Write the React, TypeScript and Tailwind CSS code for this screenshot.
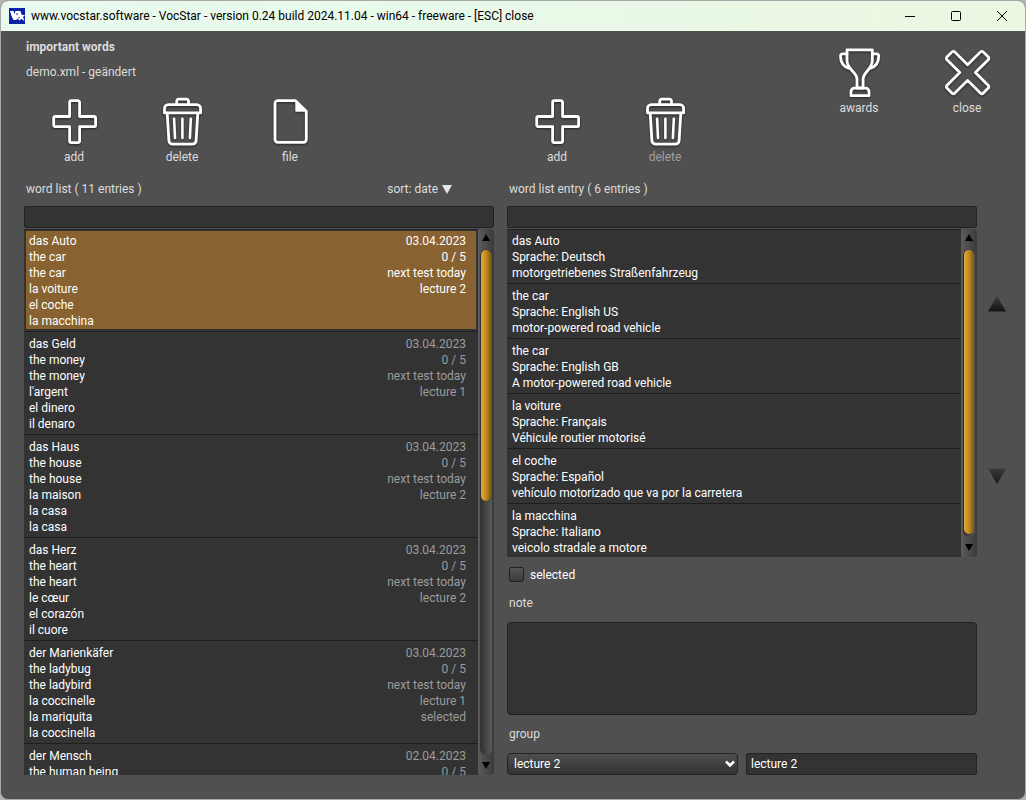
import type { ReactNode } from "react";

type Word = {
  terms: string[];
  info: string[];
  active?: boolean;
};

const words: Word[] = [
  {
    terms: ["das Auto", "the car", "the car", "la voiture", "el coche", "la macchina"],
    info: ["03.04.2023", "0 / 5", "next test today", "lecture 2"],
    active: true,
  },
  {
    terms: ["das Geld", "the money", "the money", "l'argent", "el dinero", "il denaro"],
    info: ["03.04.2023", "0 / 5", "next test today", "lecture 1"],
  },
  {
    terms: ["das Haus", "the house", "the house", "la maison", "la casa", "la casa"],
    info: ["03.04.2023", "0 / 5", "next test today", "lecture 2"],
  },
  {
    terms: ["das Herz", "the heart", "the heart", "le cœur", "el corazón", "il cuore"],
    info: ["03.04.2023", "0 / 5", "next test today", "lecture 2"],
  },
  {
    terms: ["der Marienkäfer", "the ladybug", "the ladybird", "la coccinelle", "la mariquita", "la coccinella"],
    info: ["03.04.2023", "0 / 5", "next test today", "lecture 1", "selected"],
  },
  {
    terms: ["der Mensch", "the human being"],
    info: ["02.04.2023", "0 / 5"],
  },
];

const entries: string[][] = [
  ["das Auto", "Sprache: Deutsch", "motorgetriebenes Straßenfahrzeug"],
  ["the car", "Sprache: English US", "motor-powered road vehicle"],
  ["the car", "Sprache: English GB", "A motor-powered road vehicle"],
  ["la voiture", "Sprache: Français", "Véhicule routier motorisé"],
  ["el coche", "Sprache: Español", "vehículo motorizado que va por la carretera"],
  ["la macchina", "Sprache: Italiano", "veicolo stradale a motore"],
];

function Glyph({ children }: { children: ReactNode }) {
  return (
    <svg
      viewBox="0 0 48 50"
      className="h-[50px] w-12 drop-shadow-[0_1px_1px_rgba(0,0,0,0.55)]"
      fill="none"
      stroke="#fff"
      strokeWidth="2.8"
      strokeLinejoin="round"
      strokeLinecap="round"
      aria-hidden="true"
    >
      {children}
    </svg>
  );
}

const PLUS =
  "M21.4 3.7h6.4a1.8 1.8 0 0 1 1.8 1.8V19.5H43.8a1.8 1.8 0 0 1 1.8 1.8v6.6a1.8 1.8 0 0 1-1.8 1.8H29.6V43.8a1.8 1.8 0 0 1-1.8 1.8h-6.4a1.8 1.8 0 0 1-1.8-1.8V29.7H5.5a1.8 1.8 0 0 1-1.8-1.8v-6.6a1.8 1.8 0 0 1 1.8-1.8H19.6V5.5a1.8 1.8 0 0 1 1.8-1.8Z";

const PlusIcon = () => (
  <Glyph>
    <path d={PLUS} />
  </Glyph>
);

const TrashIcon = () => (
  <Glyph>
    <path d="M18.7 7V4.6a2.4 2.4 0 0 1 2.4-2.4h7a2.4 2.4 0 0 1 2.4 2.4V7" />
    <path d="M6.5 15.9V11.5a3.8 3.8 0 0 1 3.8-3.8H38.8a3.8 3.8 0 0 1 3.8 3.8v4.4H6.5Z" />
    <path d="M9.2 16.2 10.9 43.6a3.8 3.8 0 0 0 3.8 3.6H34.3a3.8 3.8 0 0 0 3.8-3.6L39.8 16.2" />
    <path d="M16.1 21.8 17 41M24.4 21.8V41M32.8 21.8 31.9 41" strokeWidth="2.6" />
  </Glyph>
);

const FileIcon = () => (
  <Glyph>
    <path d="M11.8 3.7H29.5L40.3 14.2V42.5a2.8 2.8 0 0 1-2.8 2.8H11.8A2.8 2.8 0 0 1 9 42.5V6.5a2.8 2.8 0 0 1 2.8-2.8Z" />
    <path d="M30 4.2 40 14H30Z" fill="#fff" strokeWidth="1.4" />
  </Glyph>
);

const TrophyIcon = () => (
  <Glyph>
    <path d="M12 1.8H37.3V13C37.3 21 28.1 24.5 28.1 31V40H22V31C22 24.5 12 21 12 13Z" />
    <path d="M12 5.9H7.6A2 2 0 0 0 5.5 8C5.5 14 8.5 18.5 13.6 20.2M37.3 5.9H41.6A2 2 0 0 1 43.7 8C43.7 14 40.7 18.5 35.6 20.2" />
    <path d="M16 47.7V43.6A3.4 3.4 0 0 1 19.4 40.2H30.6A3.4 3.4 0 0 1 34 43.6V47.7Z" />
  </Glyph>
);

const CrossIcon = () => (
  <Glyph>
    <g transform="translate(24.6 24.6) rotate(45)">
      <path d="M-3.7-25.6H3.7A1.8 1.8 0 0 1 5.5-23.8V-5.5H23.8A1.8 1.8 0 0 1 25.6-3.7V3.7A1.8 1.8 0 0 1 23.8 5.5H5.5V23.8A1.8 1.8 0 0 1 3.7 25.6H-3.7A1.8 1.8 0 0 1-5.5 23.8V5.5H-23.8A1.8 1.8 0 0 1-25.6 3.7V-3.7A1.8 1.8 0 0 1-23.8-5.5H-5.5V-23.8A1.8 1.8 0 0 1-3.7-25.6Z" />
    </g>
  </Glyph>
);

function ToolButton({ label, icon, dim }: { label: string; icon: ReactNode; dim?: boolean }) {
  return (
    <button type="button" className="flex w-[108px] flex-col items-center gap-0.5">
      {icon}
      <span className={dim ? "text-[#a0a0a0]" : "text-[#dcdcdc]"}>{label}</span>
    </button>
  );
}

function Scrollbar({ thumb }: { thumb: string }) {
  return (
    <div className="flex w-4 shrink-0 flex-col items-center rounded-sm bg-linear-to-r from-[#5c5c5c] to-[#3a3a3a]">
      <button type="button" aria-label="Scroll up" className="flex h-[21px] w-full shrink-0 items-start justify-center pt-[5px]">
        <svg viewBox="0 0 8 7" className="h-[7px] w-2" aria-hidden="true">
          <path d="M4 0 8 7H0Z" fill="#000" />
        </svg>
      </button>
      <div className="min-h-0 w-3 flex-1 rounded-full bg-linear-to-r from-[#303030] to-[#5a5a5a] px-px">
        <div
          className="rounded-full bg-linear-to-r from-[#e0aa38] via-[#c08a24] to-[#80590f] shadow-[0_0_1px_#222]"
          style={{ height: thumb }}
        />
      </div>
      <button type="button" aria-label="Scroll down" className="flex h-5 w-full shrink-0 items-center justify-center">
        <svg viewBox="0 0 8 7" className="h-[7px] w-2" aria-hidden="true">
          <path d="M4 7 8 0H0Z" fill="#000" />
        </svg>
      </button>
    </div>
  );
}

function TitleBar() {
  return (
    <div className="flex h-[30px] shrink-0 items-center bg-linear-to-r from-[#e8f9ee] to-[#eaf8e2] pl-2 text-black">
      <svg viewBox="0 0 16 16" className="h-4 w-4" aria-hidden="true">
        <rect width="16" height="16" fill="#0a22a8" />
        <path
          d="M1 3h3.500l1 3 1-3h5l.5 2 1 2h3l-2 2 1.500 4-3-2-2.500 1.500-1-2L7 12H4.500L2.500 8Z"
          fill="#fff"
        />
        <path d="M7 5.500h2l-1 2ZM9.500 9h1.200v1.200H9.500Z" fill="#0a22a8" />
      </svg>
      <h1 className="ml-1.5 flex-1 truncate">
        www.vocstar.software - VocStar - version 0.24 build 2024.11.04 - win64 - freeware - [ESC] close
      </h1>
      <div className="flex h-full">
        <button type="button" aria-label="Minimize" className="flex w-[46px] items-center justify-center">
          <svg viewBox="0 0 12 12" className="h-3 w-3" fill="none" stroke="#000" aria-hidden="true">
            <path d="M1 6.500h10" />
          </svg>
        </button>
        <button type="button" aria-label="Maximize" className="flex w-[46px] items-center justify-center">
          <svg viewBox="0 0 12 12" className="h-3 w-3" fill="none" stroke="#000" aria-hidden="true">
            <rect x="1.500" y="1.500" width="9" height="9" rx="1" />
          </svg>
        </button>
        <button type="button" aria-label="Close window" className="flex w-[46px] items-center justify-center">
          <svg viewBox="0 0 12 12" className="h-3 w-3" fill="none" stroke="#000" aria-hidden="true">
            <path d="m1 1 10 10M11 1 1 11" />
          </svg>
        </button>
      </div>
    </div>
  );
}

function MoveButton({ down }: { down?: boolean }) {
  return (
    <button type="button" aria-label={down ? "Move down" : "Move up"}>
      <svg viewBox="0 0 18 16" className="h-4 w-[18px]" aria-hidden="true">
        <defs>
          <linearGradient id={down ? "moveDown" : "moveUp"} x1="0" y1="0" x2="0" y2="1">
            <stop offset="0" stopColor="#3c3c3c" />
            <stop offset="1" stopColor="#141414" />
          </linearGradient>
        </defs>
        <path d={down ? "M0 .5H18L9 16Z" : "M9 0 18 15.500H0Z"} fill={down ? "url(#moveDown)" : "url(#moveUp)"} />
      </svg>
    </button>
  );
}

const field = "h-[22px] w-full min-w-0 rounded-xs border border-[#222] bg-[#333] px-1 text-white outline-none";

export default function App() {
  return (
    <div className="h-screen bg-[#b4b4b4] font-['Roboto','Noto_Sans',sans-serif] text-[12px] leading-4">
      <div className="flex h-full flex-col overflow-hidden rounded-lg border border-[#a8a8a8] bg-[#505050]">
        <TitleBar />
        <main className="flex min-h-0 flex-1 flex-col pr-12 pb-6 pl-[23px] text-[#dcdcdc]">
          <header className="flex gap-[13px] pt-2">
            <div className="min-w-0 flex-1">
              <h2 className="pl-0.5 font-bold">important words</h2>
              <p className="mt-[9px] pl-0.5">demo.xml - geändert</p>
              <div className="mt-[17px] -ml-1 flex">
                <ToolButton label="add" icon={<PlusIcon />} />
                <ToolButton label="delete" icon={<TrashIcon />} />
                <ToolButton label="file" icon={<FileIcon />} />
              </div>
            </div>
            <div className="flex min-w-0 flex-1 flex-col">
              <div className="-mr-11 -ml-1 flex flex-1 justify-between">
                <div className="flex items-end">
                  <ToolButton label="add" icon={<PlusIcon />} />
                  <ToolButton label="delete" icon={<TrashIcon />} dim />
                </div>
                <div className="flex items-start pt-[9px]">
                  <ToolButton label="awards" icon={<TrophyIcon />} />
                  <ToolButton label="close" icon={<CrossIcon />} />
                </div>
              </div>
            </div>
          </header>

          <div className="mt-4 flex min-h-0 flex-1 gap-[13px]">
            <section className="flex min-w-0 flex-1 flex-col">
              <div className="flex justify-between pr-[42px] pl-0.5">
                <label htmlFor="wordFilter">word list ( 11 entries )</label>
                <button type="button" className="flex items-center gap-1">
                  sort: date
                  <svg viewBox="0 0 10 9" className="h-[9px] w-2.5" aria-hidden="true">
                    <path d="M0 0H10L5 9Z" fill="#e6e6e6" />
                  </svg>
                </button>
              </div>
              <input id="wordFilter" type="text" className={`${field} mt-[9px] shrink-0`} />
              <div className="mt-px flex min-h-0 flex-1">
                <ul className="min-w-0 flex-1 overflow-hidden bg-[#333] shadow-[inset_0_1px_0_#222] [&>li:last-child]:border-0">
                  {words.map((word, i) => (
                    <li key={i} className="border-b border-[#1e1e1e] p-0.5">
                      <div
                        className={`flex justify-between pt-0.5 pr-2.5 pl-[3px] ${
                          word.active ? "bg-[#886230] text-white" : "text-[#9b9b9b]"
                        }`}
                      >
                        <div className="text-white">
                          {word.terms.map((term, j) => (
                            <div key={j}>{term}</div>
                          ))}
                        </div>
                        <div className="text-right">
                          {word.info.map((line, j) => (
                            <div key={j}>{line}</div>
                          ))}
                        </div>
                      </div>
                    </li>
                  ))}
                </ul>
                <Scrollbar thumb="49.7%" />
              </div>
            </section>

            <section className="flex min-w-0 flex-1 flex-col">
              <label htmlFor="entryFilter" className="pl-0.5">
                word list entry ( 6 entries )
              </label>
              <input id="entryFilter" type="text" className={`${field} mt-[9px] shrink-0`} />
              <div className="mt-px flex min-h-0 flex-1">
                <ul className="min-w-0 flex-1 overflow-hidden bg-[#333] shadow-[inset_0_1px_0_#222] [&>li:last-child]:border-0">
                  {entries.map((lines, i) => (
                    <li key={i} className="border-b border-[#1e1e1e] px-[5px] pt-1 pb-0.5 text-white">
                      {lines.map((line, j) => (
                        <div key={j}>{line}</div>
                      ))}
                    </li>
                  ))}
                </ul>
                <Scrollbar thumb="99%" />
                <div className="-mr-12 flex w-12 shrink-0 flex-col items-start justify-between pt-[67px] pb-[73px] pl-[11px]">
                  <MoveButton />
                  <MoveButton down />
                </div>
              </div>

              <label className="mt-2.5 flex items-start gap-1.5 pl-0.5 text-white">
                <input
                  type="checkbox"
                  className="h-[15px] w-[15px] appearance-none rounded-xs border border-[#222] bg-linear-to-b from-[#555] to-[#3a3a3a] checked:bg-[#c08a24]"
                />
                selected
              </label>

              <label htmlFor="note" className="mt-3 pl-0.5">
                note
              </label>
              <textarea
                id="note"
                className="mt-[11px] block h-[93px] w-full shrink-0 resize-none rounded-sm border border-[#222] bg-[#333] p-1 text-white outline-none"
              />

              <label htmlFor="group" className="mt-[11px] pl-0.5">
                group
              </label>
              <div className="mt-[11px] flex gap-2">
                <div className="relative flex-1">
                  <select
                    id="group"
                    className="block h-[22px] w-full appearance-none rounded-sm border border-[#222] bg-linear-to-b from-[#4e4e4e] to-[#333] px-1.5 text-white outline-none"
                  >
                    <option>lecture 2</option>
                    <option>lecture 1</option>
                  </select>
                  <svg
                    viewBox="0 0 10 8"
                    className="pointer-events-none absolute top-[7px] right-[3px] h-2 w-2.5"
                    fill="none"
                    stroke="#fff"
                    strokeWidth="2.6"
                    aria-hidden="true"
                  >
                    <path d="M1 1.500 5 5.500 9 1.500" />
                  </svg>
                </div>
                <div className="flex-1">
                  <input type="text" aria-label="group name" defaultValue="lecture 2" className={`${field} block`} />
                </div>
              </div>
            </section>
          </div>
        </main>
      </div>
    </div>
  );
}
